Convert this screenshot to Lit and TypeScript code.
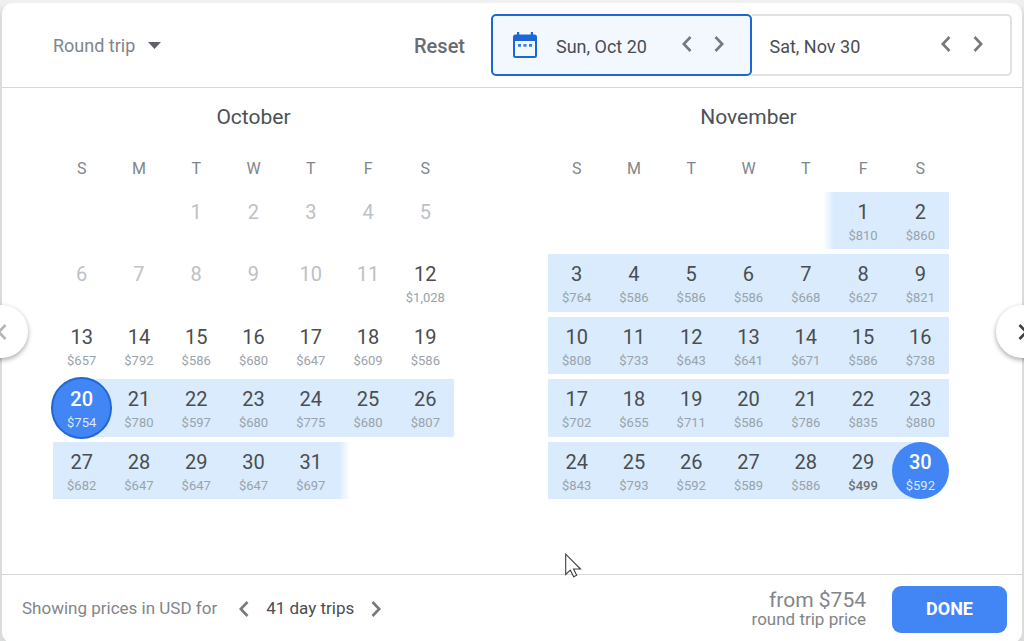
import { LitElement, html, css, nothing, svg } from "lit";
import { customElement, property } from "lit/decorators.js";
import { classMap } from "lit/directives/class-map.js";

interface Day {
  n: number;
  price?: string;
  past?: boolean;
  inRange?: boolean;
  start?: boolean;
  end?: boolean;
  fadeLeft?: boolean;
  fadeRight?: boolean;
  deal?: boolean;
}

const OCT_PRICES = [
  "1,028", "657", "792", "586", "680", "647", "609", "586", "754", "780",
  "597", "680", "775", "680", "807", "682", "647", "647", "647", "697",
];
const NOV_PRICES = [
  "810", "860", "764", "586", "586", "586", "668", "627", "821", "808",
  "733", "643", "641", "671", "586", "738", "702", "655", "711", "586",
  "786", "835", "880", "843", "793", "592", "589", "586", "499", "592",
];

const october: Day[] = Array.from({ length: 31 }, (_, i) => {
  const n = i + 1;
  return {
    n,
    past: n < 12,
    price: n < 12 ? undefined : OCT_PRICES[n - 12],
    inRange: n >= 20,
    start: n === 20,
    fadeRight: n === 31,
  };
});
const november: Day[] = NOV_PRICES.map((price, i) => ({
  n: i + 1,
  price,
  inRange: true,
  end: i === 29,
  fadeLeft: i === 0,
  deal: price === "499",
}));

const shared = css`
  * {
    box-sizing: border-box;
  }
  button,
  input,
  select {
    font: inherit;
    color: inherit;
    background: none;
    border: 0;
    margin: 0;
    padding: 0;
    outline: 0;
  }
  button {
    cursor: pointer;
  }
`;

const chevron = (dir: "left" | "right") => html`
  <svg width="12" height="18" viewBox="0 0 12 18" fill="none" stroke="currentColor" stroke-width="2.6" aria-hidden="true">
    ${dir === "left" ? svg`<path d="M9.5 2 L2.8 9 L9.5 16"/>` : svg`<path d="M2.5 2 L9.2 9 L2.5 16"/>`}
  </svg>
`;

@customElement("month-grid")
export class MonthGrid extends LitElement {
  @property() name = "";
  @property({ type: Number }) offset = 0;
  @property({ attribute: false }) days: Day[] = [];

  static styles = [
    shared,
    css`
      :host {
        display: block;
        flex: 1 1 0;
        min-width: 0;
      }
      table,
      thead,
      caption {
        display: block;
      }
      caption {
        font-size: 21px;
        line-height: 24px;
        text-align: center;
        color: #4d5156;
      }
      thead {
        margin: 30px 0 13px;
      }
      tr {
        display: grid;
        grid-template-columns: repeat(7, 1fr);
      }
      th {
        padding: 0;
        font-size: 16px;
        font-weight: 400;
        line-height: 20px;
        color: #80868b;
      }
      tbody {
        display: grid;
        grid-auto-rows: 1fr;
        gap: 5px;
        min-height: 307px;
      }
      td {
        padding: 0;
        position: relative;
      }
      .day {
        position: relative;
        width: 100%;
        height: 100%;
        display: flex;
        flex-direction: column;
        align-items: center;
        justify-content: flex-start;
        padding-top: 8px;
        gap: 4px;
        color: #4a4d51;
      }
      .num {
        font-size: 20px;
        line-height: 24px;
        position: relative;
      }
      .price {
        font-size: 13px;
        line-height: 16px;
        color: #9aa3ab;
        position: relative;
      }
      .past .day {
        color: #bdc1c6;
      }
      .range {
        background: #d9ebfc;
      }
      .start {
        background: linear-gradient(90deg, transparent 50%, #d9ebfc 50%);
      }
      .end {
        background: linear-gradient(90deg, #d9ebfc 50%, transparent 50%);
      }
      .start .day::before,
      .end .day::before {
        content: "";
        position: absolute;
        inset: 0;
        border-radius: 50%;
        background: #4285f4;
      }
      .start .day::before {
        inset: -2px;
        border: 2px solid #2268d4;
      }
      .start .day,
      .end .day {
        color: #fff;
        z-index: 1;
      }
      .start .num,
      .end .num {
        font-weight: 500;
      }
      .start .price,
      .end .price {
        color: #dbe8fd;
      }
      .deal .price {
        color: #6b7075;
        font-weight: 500;
      }
      .fade-left::before,
      .fade-right::after {
        content: "";
        position: absolute;
        top: 0;
        bottom: 0;
        width: 11px;
      }
      .fade-left::before {
        right: 100%;
        background: linear-gradient(270deg, #d9ebfc, #ffffff);
      }
      .fade-right::after {
        left: 100%;
        background: linear-gradient(90deg, #d9ebfc, #ffffff);
      }
    `,
  ];

  private cell(d: Day | null) {
    if (!d) return html`<td></td>`;
    const classes = {
      past: !!d.past,
      range: !!d.inRange && !d.start && !d.end,
      start: !!d.start,
      end: !!d.end,
      deal: !!d.deal,
      "fade-left": !!d.fadeLeft,
      "fade-right": !!d.fadeRight,
    };
    return html`<td class=${classMap(classes)}>
      <button class="day" ?disabled=${d.past}>
        <span class="num">${d.n}</span>
        ${d.price ? html`<span class="price">$${d.price}</span>` : nothing}
      </button>
    </td>`;
  }

  render() {
    const cells: (Day | null)[] = [...Array(this.offset).fill(null), ...this.days];
    const weeks: (Day | null)[][] = [];
    for (let i = 0; i < cells.length; i += 7) weeks.push(cells.slice(i, i + 7));
    return html`
      <table>
        <caption>${this.name}</caption>
        <thead>
          <tr>${["S", "M", "T", "W", "T", "F", "S"].map((w) => html`<th scope="col">${w}</th>`)}</tr>
        </thead>
        <tbody>
          ${weeks.map((w) => html`<tr>${w.map((d) => this.cell(d))}</tr>`)}
        </tbody>
      </table>
    `;
  }
}

@customElement("app-root")
export class AppRoot extends LitElement {
  static styles = [
    shared,
    css`
      :host {
        display: block;
        box-sizing: border-box;
        height: 100vh;
        overflow: hidden;
        padding: 3px 2px 0;
        font-family: Roboto, "Liberation Sans", sans-serif;
        color: #4a4d51;
        background: linear-gradient(#f0f0f0 4px, #dadbdb 16px);
      }
      .panel {
        display: flex;
        flex-direction: column;
        min-height: calc(100vh - 1px);
        background: #fff;
        border-radius: 11px;
      }
      .header {
        display: flex;
        align-items: center;
        height: 85px;
        padding: 0 10px 0 51px;
        border-bottom: 1px solid #d6d8da;
        font-size: 18px;
        line-height: 24px;
      }
      .trip {
        display: flex;
        align-items: center;
        gap: 12px;
        color: #80868b;
      }
      .trip select {
        appearance: none;
        line-height: 24px;
        padding-top: 2px;
      }
      .trip svg {
        color: #5f6368;
      }
      .reset {
        margin: 0 26px 0 auto;
        padding-top: 1px;
        font-size: 20px;
        font-weight: 500;
        color: #686c70;
      }
      .fields {
        display: flex;
        flex: 0 1 521px;
        min-width: 0;
      }
      .field {
        flex: 1 1 50%;
        min-width: 0;
        height: 62px;
        display: flex;
        align-items: center;
        border: 2px solid #dfe1e3;
        border-left: 0;
        border-radius: 0 5px 5px 0;
        padding: 0 16px 0 18px;
      }
      .field.active {
        border: 2px solid #1b66d9;
        border-radius: 5px;
        background: #f3f8ff;
        padding: 0 15px 0 20px;
      }
      .field .icon {
        flex: none;
        margin-right: 19px;
      }
      .field input {
        flex: 1 1 0;
        min-width: 0;
        height: 26px;
        padding-top: 2px;
      }
      .steps {
        display: flex;
        padding-bottom: 3px;
      }
      .step {
        width: 32px;
        height: 32px;
        display: flex;
        align-items: center;
        justify-content: center;
        color: #757a7e;
      }
      .body {
        position: relative;
        flex: 1 0 auto;
        display: flex;
        gap: 94px;
        padding: 17px 73px 72px 51px;
      }
      .page {
        position: absolute;
        top: 50%;
        width: 53px;
        height: 53px;
        margin-top: -26px;
        border-radius: 50%;
        background: #fff;
        box-shadow: 0 2px 5px rgba(0, 0, 0, 0.35);
        display: flex;
        align-items: center;
        justify-content: center;
      }
      .page.prev {
        left: -27px;
        color: #b4b6b8;
      }
      .page.next {
        right: -27px;
        color: #3c4043;
      }
      .cursor {
        position: absolute;
        left: 563px;
        top: 465px;
        z-index: 2;
      }
      .footer {
        display: flex;
        align-items: center;
        height: 69px;
        padding: 0 15px 0 20px;
        border-top: 1px solid #d6d8da;
        font-size: 17px;
        line-height: 20px;
        color: #80868b;
      }
      .shorter {
        margin-left: 11px;
      }
      .note,
      .length {
        padding-bottom: 2px;
      }
      .length {
        margin: 0 6px;
        color: #4a4d51;
      }
      .total {
        margin: 0 26px 0 auto;
        text-align: right;
        line-height: 18px;
      }
      .amount {
        font-size: 21px;
        line-height: 20px;
      }
      .done {
        width: 115px;
        height: 47px;
        border-radius: 9px;
        background: #4285f4;
        color: #fff;
        font-size: 18px;
        font-weight: 700;
      }
    `,
  ];

  render() {
    return html`
      <div class="panel">
        <header class="header">
          <label class="trip">
            <select aria-label="Trip type">
              <option>Round trip</option>
            </select>
            <svg width="13" height="7" viewBox="0 0 13 7" aria-hidden="true"><path fill="currentColor" d="M0 0h13L6.5 7z"/></svg>
          </label>
          <button class="reset">Reset</button>
          <div class="fields">
            <div class="field active">
              <svg class="icon" width="24" height="27" viewBox="0 0 24 27" aria-hidden="true">
                <path fill="#1b66d9" fill-rule="evenodd" d="M4 0h2.200v2.500h11.600V0H20v2.500h1.500A2.500 2.500 0 0 1 24 5v18.500a2.500 2.500 0 0 1-2.500 2.500h-19A2.500 2.500 0 0 1 0 23.500V5a2.500 2.500 0 0 1 2.500-2.500H4zM2 9v15h20V9z"/>
                <path fill="#3a7be0" d="M5 12h3v2.800H5zM10.500 12h3v2.800h-3zM16 12h3v2.800h-3z"/>
              </svg>
              <input type="text" aria-label="Departure date" .value=${"Sun, Oct 20"} />
              <div class="steps">
                <button class="step" aria-label="Earlier departure">${chevron("left")}</button>
                <button class="step" aria-label="Later departure">${chevron("right")}</button>
              </div>
            </div>
            <div class="field">
              <input type="text" aria-label="Return date" .value=${"Sat, Nov 30"} />
              <div class="steps">
                <button class="step" aria-label="Earlier return">${chevron("left")}</button>
                <button class="step" aria-label="Later return">${chevron("right")}</button>
              </div>
            </div>
          </div>
        </header>
        <main class="body">
          <month-grid name="October" .offset=${2} .days=${october}></month-grid>
          <month-grid name="November" .offset=${5} .days=${november}></month-grid>
          <button class="page prev" aria-label="Previous months">${chevron("left")}</button>
          <button class="page next" aria-label="Next months">${chevron("right")}</button>
          <svg class="cursor" width="17" height="25" viewBox="0 0 17 25" aria-hidden="true">
            <path fill="#fff" stroke="#3c4043" stroke-width="1.100" d="M.7 1.200V21.500L5.300 17.200L8.700 23.800L11.700 22.300L8.500 16H15.500z"/>
          </svg>
        </main>
        <footer class="footer">
          <span class="note">Showing prices in USD for</span>
          <button class="step shorter" aria-label="Shorter trip">${chevron("left")}</button>
          <span class="length">41 day trips</span>
          <button class="step" aria-label="Longer trip">${chevron("right")}</button>
          <div class="total">
            <div class="amount">from $754</div>
            <div>round trip price</div>
          </div>
          <button class="done">DONE</button>
        </footer>
      </div>
    `;
  }
}
